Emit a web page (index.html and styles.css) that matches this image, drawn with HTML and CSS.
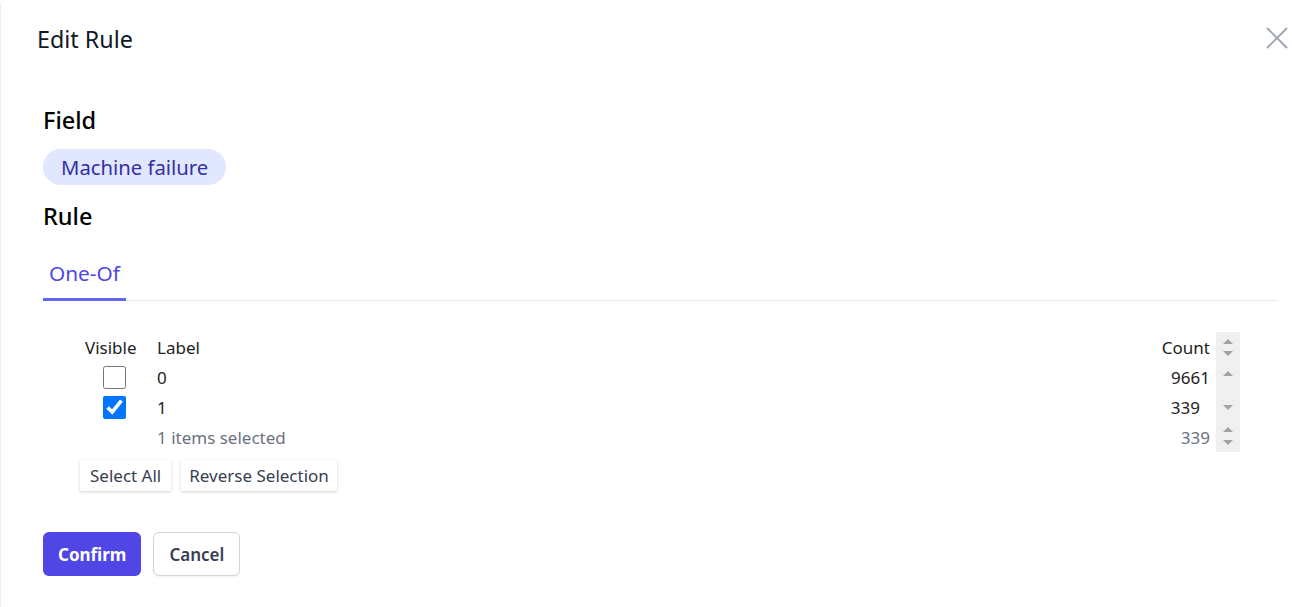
FILE: index.html
```html
<!DOCTYPE html>
<html>
<head>
<meta charset="utf-8">
<link rel="stylesheet" href="styles.css">
</head>
<body>
<div class="modal">
  <div class="header">
    <div class="title">Edit Rule</div>
    <button class="close" aria-label="Close">
      <svg width="22" height="22" viewBox="0 0 22 22"><path d="M1 1 L21 21 M21 1 L1 21" stroke="#9ca3af" stroke-width="1.8" fill="none"/></svg>
    </button>
  </div>
  <div class="body">
    <div class="section-title">Field</div>
    <div class="chip-row"><span class="chip">Machine failure</span></div>
    <div class="section-title rule">Rule</div>
    <div class="tabs"><div class="tab active">One-Of</div></div>
    <div class="table-wrap">
      <div class="grid">
        <div class="row">
          <div class="c-vis head">Visible</div>
          <div class="c-label">Label</div>
          <div class="c-count">Count</div>
          <div class="sb"><span class="up u-h"></span><span class="down d-h"></span></div>
        </div>
        <div class="row">
          <div class="c-vis"><input type="checkbox"></div>
          <div class="c-label">0</div>
          <div class="c-count">9661</div>
          <div class="sb"><span class="up u-1"></span></div>
        </div>
        <div class="row">
          <div class="c-vis"><input type="checkbox" checked></div>
          <div class="c-label">1</div>
          <div class="c-count pad">339</div>
          <div class="sb"><span class="down d-2"></span></div>
        </div>
        <div class="row muted">
          <div class="c-vis"></div>
          <div class="c-label">1 items selected</div>
          <div class="c-count">339</div>
          <div class="sb"><span class="up u-3"></span><span class="down d-3"></span></div>
        </div>
      </div>
      <div class="sel-btns">
        <button class="light sa">Select All</button>
        <button class="light rs">Reverse Selection</button>
      </div>
    </div>
    <div class="actions">
      <button class="primary">Confirm</button>
      <button class="secondary">Cancel</button>
    </div>
  </div>
</div>
</body>
</html>
```
FILE: styles.css
```css
* { box-sizing: border-box; }
html, body { margin: 0; padding: 0; background: #fff; }
body { font-family: "Noto Sans", "Open Sans", sans-serif; width: 1292px; height: 607px; overflow: hidden; }
.modal { height: 607px; border-left: 1px solid #ececec; border-top-left-radius: 6px; }
.header { height: 80px; display: flex; align-items: center; justify-content: space-between; padding: 0 4px 0 36px; }
.title { font-size: 23.3px; color: #111827; line-height: 30px; margin-top: -2px; }
.close { background: none; border: 0; padding: 0; width: 22px; height: 22px; margin-top: -4px; }
.body { padding: 0 15px 0 42px; }
.section-title { font-size: 23.5px; font-weight: 500; line-height: 32px; color: #000; margin-top: 24px; }
.section-title.rule { margin-top: 15px; }
.chip-row { margin-top: 13px; display: flex; }
.chip { display: inline-block; height: 36px; line-height: 36px; padding: 0 18px; border-radius: 18px; background: #e0e7ff; color: #3730a3; font-size: 20.3px; }
.tabs { margin-top: 12px; display: flex; border-bottom: 1px solid #e5e7eb; }
.tab { padding: 15px 6px 11px; font-size: 20.8px; line-height: 28px; color: #4f46e5; border-bottom: 3px solid #6366f1; margin-bottom: -1px; }
.table-wrap { padding: 31px 37px 0; }
.grid { display: flex; flex-direction: column; }
.row { display: flex; height: 30px; align-items: center; font-size: 17px; color: #222; }
.row.muted { color: #6b7280; }
.c-vis { width: 72px; display: flex; justify-content: center; padding-right: 4px; }
.c-vis.head { justify-content: flex-start; padding-left: 5px; padding-right: 0; }
.c-vis input { width: 23px; height: 23px; margin: 0; }
.c-label { flex: 1; padding-left: 5px; }
.c-count { text-align: right; padding-right: 6px; }
.c-count.pad { padding-right: 16px; }
.sb { width: 24px; height: 30px; background: #f0f0f0; align-self: stretch; display: flex; flex-direction: column; align-items: center; }
.up, .down { width: 0; height: 0; border-left: 5px solid transparent; border-right: 5px solid transparent; }
.up { border-bottom: 5px solid #a3a3a3; }
.down { border-top: 5px solid #a3a3a3; }
.u-h { margin-top: 7px; }
.d-h { margin-top: 7px; }
.u-1 { margin-top: 9px; }
.d-2 { margin-top: 13px; }
.u-3 { margin-top: 5px; }
.d-3 { margin-top: 8px; }
.sel-btns { display: flex; gap: 10px; margin-top: 8px; }
.light { font-family: inherit; font-size: 17px; color: #374151; background: #fff; border: 0; height: 31px; box-shadow: 0 1px 3px rgba(0,0,0,0.18); }
.light.sa { padding: 0 10px; }
.light.rs { padding: 0 8px; }
.actions { display: flex; gap: 12px; margin-top: 41px; }
.primary, .secondary { font-family: inherit; font-size: 17px; height: 44px; border-radius: 6px; }
.primary { background: #4f46e5; color: #fff; border: 0; padding: 0 15px; font-weight: 700; }
.secondary { background: #fff; color: #374151; border: 1px solid #d1d5db; padding: 0 15px; font-weight: 600; box-shadow: 0 1px 2px rgba(0,0,0,0.06); }
```
